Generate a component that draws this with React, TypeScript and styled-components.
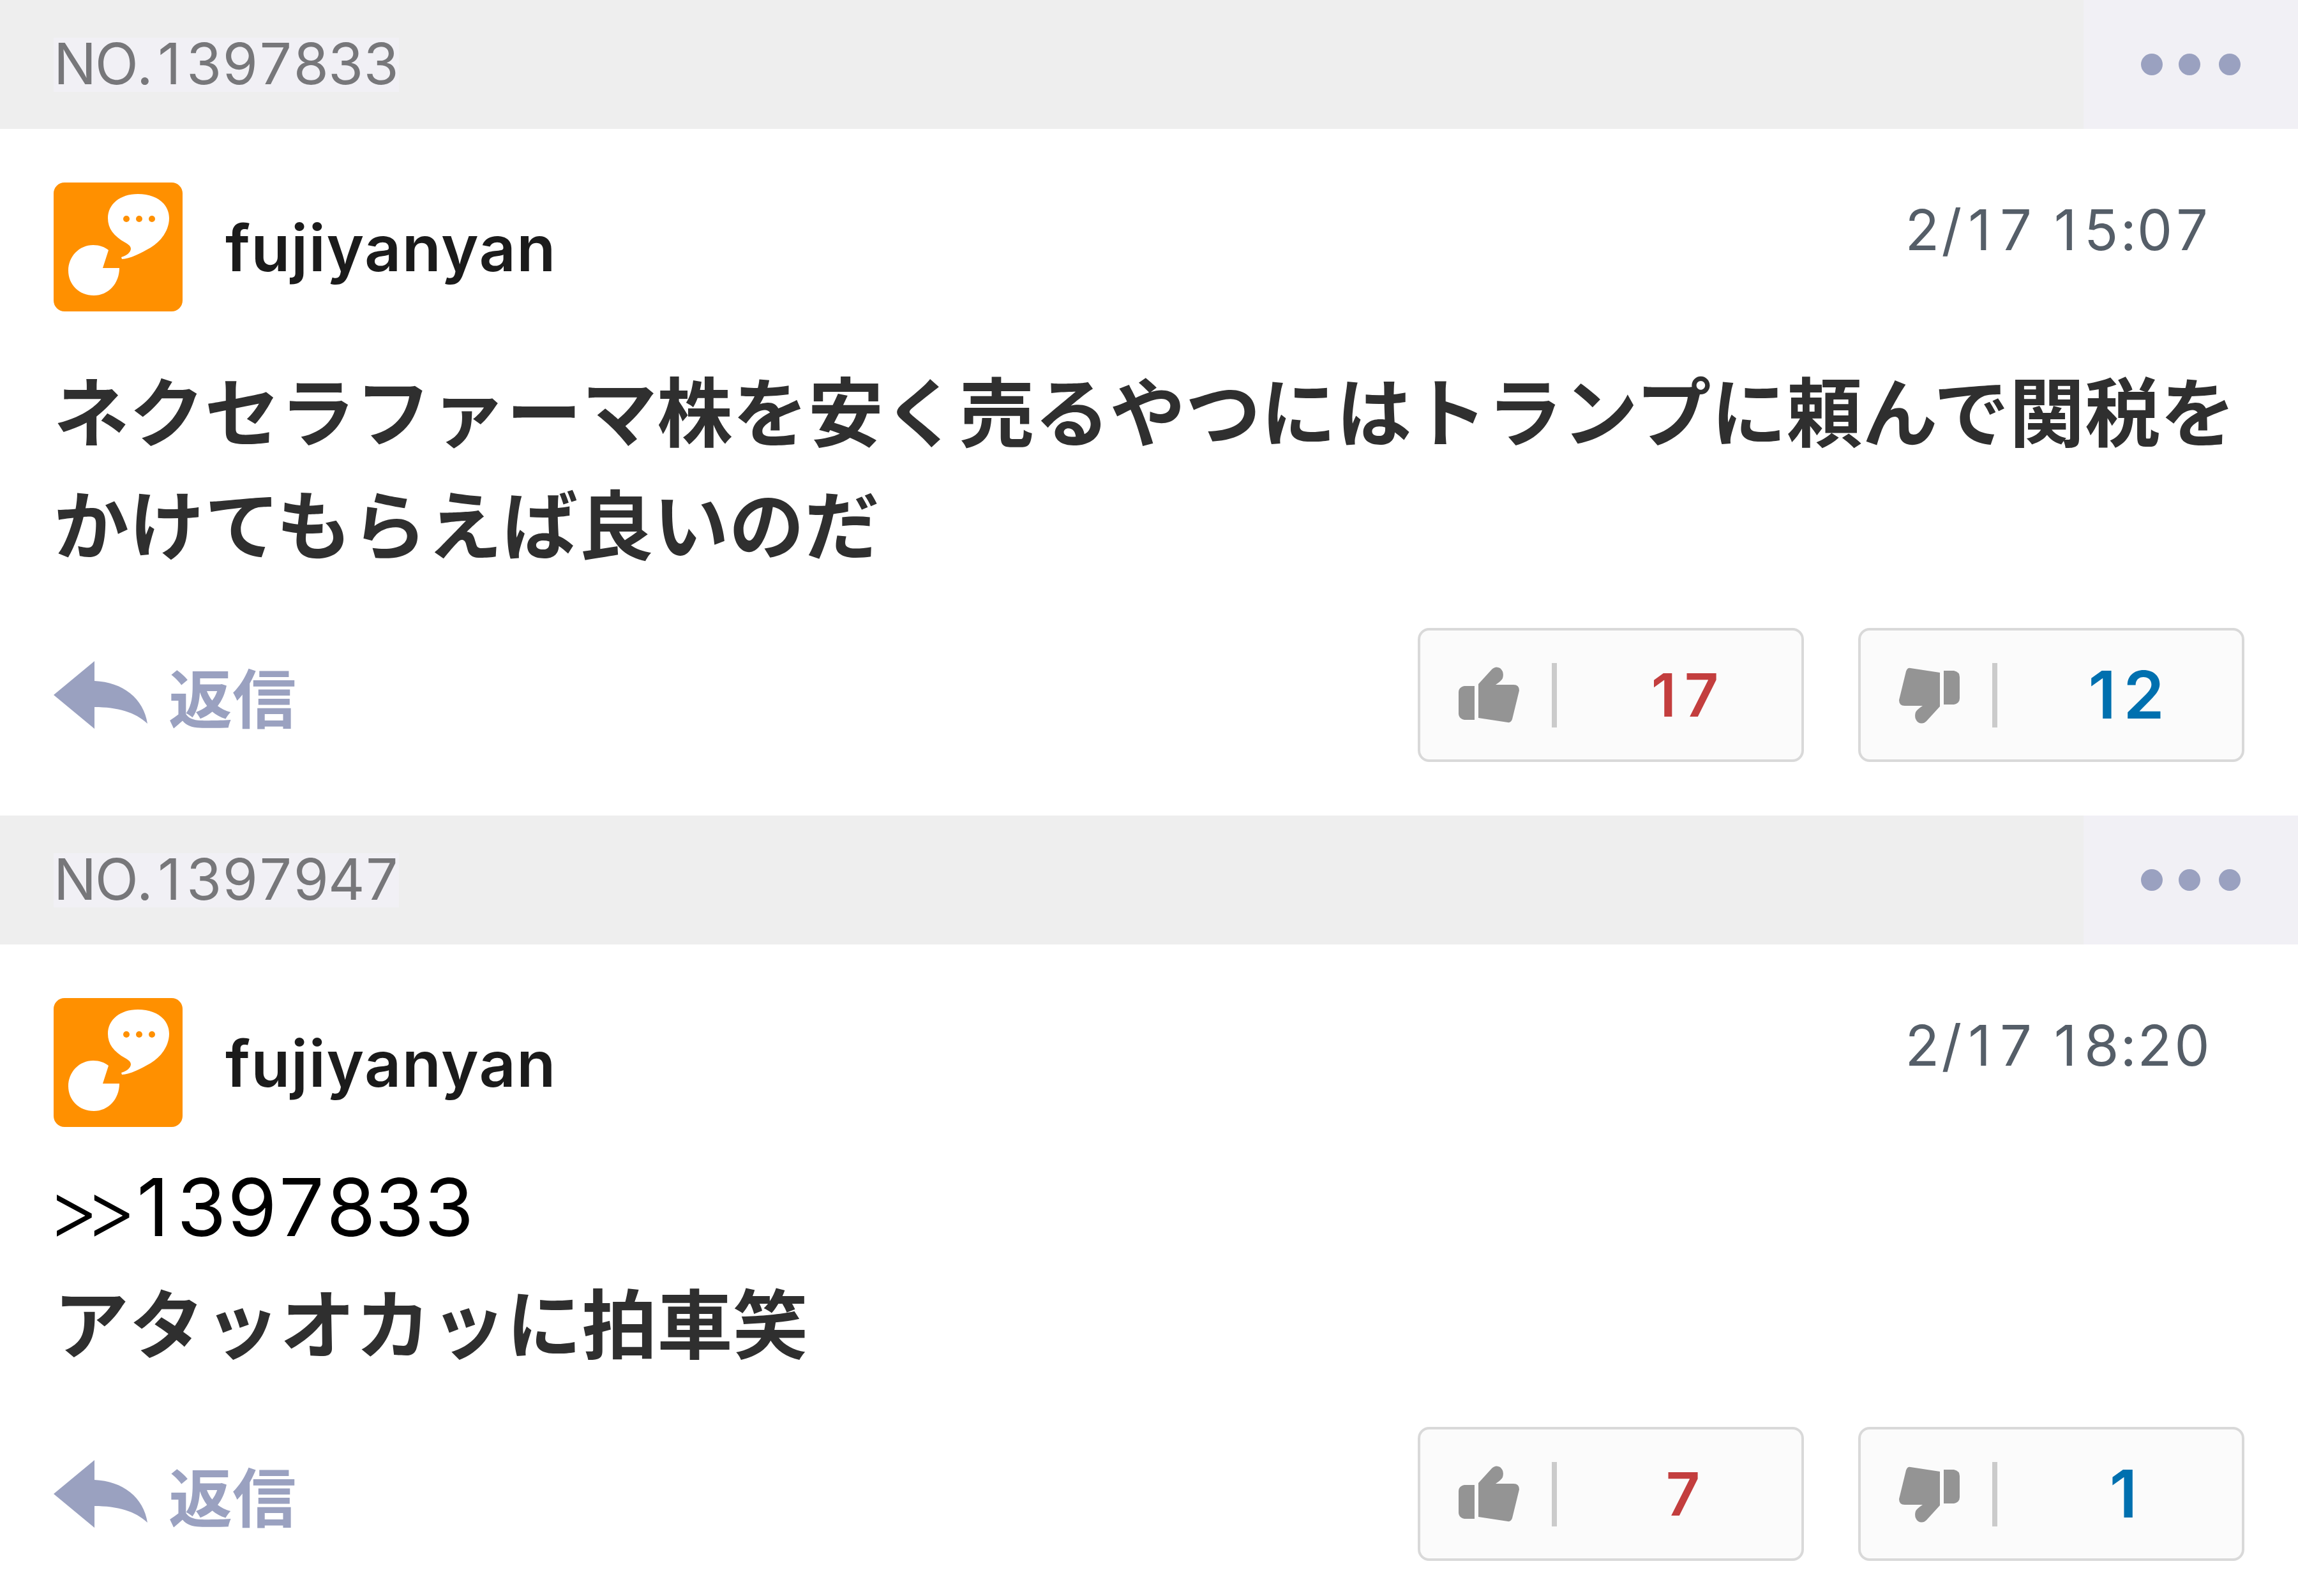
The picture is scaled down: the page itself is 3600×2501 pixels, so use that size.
import styled, { createGlobalStyle } from "styled-components";

interface Post {
  no: string;
  user: string;
  date: string;
  replyTo?: string;
  text: string;
  good: number;
  bad: number;
}

const posts: Post[] = [
  {
    no: "1397833",
    user: "fujiyanyan",
    date: "2/17 15:07",
    text: "ネクセラファーマ株を安く売るやつにはトランプに頼んで関税をかけてもらえば良いのだ",
    good: 17,
    bad: 12,
  },
  {
    no: "1397947",
    user: "fujiyanyan",
    date: "2/17 18:20",
    replyTo: "1397833",
    text: "アタッオカッに拍車笑",
    good: 7,
    bad: 1,
  },
];

const App = () => {
  return (
    <>
      <GlobalStyle />
      <Board>
        {posts.map((post) => (
          <PostItem key={post.no} post={post} />
        ))}
      </Board>
    </>
  );
};

export default App;

const PostItem = ({ post }: { post: Post }) => {
  return (
    <article>
      <PostHeader>
        <PostNumber>
          <Digits text={`NO.${post.no}`} />
        </PostNumber>
        <MenuButton aria-label="メニュー">
          <svg width="156" height="34" viewBox="0 0 156 34" fill="#9aa1c0">
            <circle cx="17" cy="17" r="17" />
            <circle cx="76" cy="17" r="17" />
            <circle cx="139" cy="17" r="17" />
          </svg>
        </MenuButton>
      </PostHeader>

      <PostBody>
        <UserRow>
          <AvatarIcon />
          <UserName>{post.user}</UserName>
          <PostDate>
            <Digits text={post.date} />
          </PostDate>
        </UserRow>

        {/* 返信先があるときは上の余白が狭い */}
        <Message $isReply={!!post.replyTo}>
          {post.replyTo && (
            <ReplyLink>
              <Arrows>&gt;&gt;</Arrows>
              <Digits text={post.replyTo} />
            </ReplyLink>
          )}
          <MessageText>{post.text}</MessageText>
        </Message>

        <ActionRow>
          <ReplyButton>
            <ReplyIcon />
            返信
          </ReplyButton>
          <VoteButton>
            <ThumbIcon />
            <Divider />
            <VoteCount $color="#c33e3e" $size={93}>
              <Digits text={String(post.good)} />
            </VoteCount>
          </VoteButton>
          <VoteButton>
            <ThumbIcon down />
            <Divider />
            <VoteCount $color="#0070af" $size={103}>
              <Digits text={String(post.bad)} />
            </VoteCount>
          </VoteButton>
        </ActionRow>
      </PostBody>
    </article>
  );
};

// 等幅数字の「1」は下線付きになるので、「1」だけ通常の字形で同じ幅に揃える
const Digits = ({ text }: { text: string }) => (
  <>
    {text.split(/(1)/).map((part, i) =>
      part === "1" ? <One key={i}>1</One> : part
    )}
  </>
);

const AvatarIcon = () => (
  <svg width="202" height="202" viewBox="0 0 202 202">
    <rect width="202" height="202" rx="17" fill="#ff9000" />
    <path
      d="M86 106 C80 101 72 98 62 98 C40 98 23 116 23 138 C23 160 40 177 63 177 C86 177 103 158 103 134 L77 134 Z"
      fill="#fff"
    />
    <path
      d="M132 18 C104 18 85 34 85 56 C85 72 94 84 112 94 C121 99 123 103 119 109 C116 113 112 115 106 117 L107 120 C119 120 138 110 152 102 C169 92 181 74 181 56 C181 34 162 18 132 18 Z"
      fill="#fff"
    />
    <g fill="#ff9000">
      <circle cx="114" cy="57" r="5" />
      <circle cx="134" cy="57" r="5" />
      <circle cx="154" cy="57" r="5" />
    </g>
  </svg>
);

const ReplyIcon = () => (
  <svg width="148" height="106" viewBox="0 0 148 106" fill="#9aa1c0">
    <path d="M0 53 L64 0 V31 C108 33 141 58 147 98 C128 80 100 72 64 72 V106 Z" />
  </svg>
);

const ThumbIcon = ({ down }: { down?: boolean }) => (
  <svg width="95" height="89" viewBox="0 0 95 89" fill="#949494">
    <g transform={down ? "rotate(180 47.5 44.5)" : undefined}>
      <path d="M9 30 H25 V83 H9 Q0 81 0 73 V40 Q0 32 9 30 Z" />
      <path d="M31 27 L52 4 Q58 -2 65 2 Q72 8 69 18 Q67 22 58 28 H86 Q95 28 95 37 L84 82 Q82 88 77 87 L31 80 Z" />
    </g>
  </svg>
);

const GlobalStyle = createGlobalStyle`
  body {
    margin: 0;
    background: #fff;
    font-family: Inter, "Noto Sans CJK JP", sans-serif;
  }

  button {
    border: 0;
    padding: 0;
    background: none;
    font-family: inherit;
  }
`;

const Board = styled.main`
  width: 3600px;
  height: 2501px;
  overflow: hidden;
`;

const One = styled.span`
  display: inline-block;
  width: 0.625em;
  text-align: center;
  font-variant-numeric: normal;
`;

const PostHeader = styled.header`
  display: flex;
  align-items: center;
  justify-content: space-between;
  height: 202px;
  padding-left: 84px;
  background: #eeeeee;
`;

const PostNumber = styled.span`
  box-sizing: border-box;
  width: 541px;
  height: 85px;
  background: #f1f0f5;
  color: #77777a;
  font-size: 89px;
  font-weight: 400;
  letter-spacing: -0.025em;
  line-height: 81px;
  font-variant-numeric: tabular-nums;
  white-space: nowrap;
`;

const MenuButton = styled.button`
  display: flex;
  align-items: center;
  justify-content: center;
  width: 336px;
  height: 100%;
  background: #f1f0f5;
`;

const PostBody = styled.div`
  padding: 84px;
`;

const UserRow = styled.div`
  display: flex;
  align-items: flex-start;
  height: 202px;
`;

const UserName = styled.span`
  margin: 43px 0 0 67px;
  color: #1b1b1b;
  font-size: 100px;
  font-weight: 600;
  letter-spacing: 1.5px;
  line-height: 120px;
`;

const PostDate = styled.time`
  width: 477px;
  margin: 14px 56px 0 auto;
  color: #555e68;
  font-size: 88px;
  font-weight: 400;
  letter-spacing: 0.015em;
  word-spacing: -4px;
  line-height: 120px;
  font-variant-numeric: tabular-nums;
  white-space: nowrap;
`;

const Message = styled.div<{ $isReply: boolean }>`
  margin-top: ${({ $isReply }) => ($isReply ? 37 : 63)}px;
  margin-right: -84px;
`;

const ReplyLink = styled.a`
  display: block;
  color: #000;
  font-size: 125px;
  font-weight: 400;
  letter-spacing: -0.028em;
  line-height: 177px;
  font-variant-numeric: tabular-nums;
`;

const Arrows = styled.span`
  margin: 0 5px 0 -8px;
  font-weight: 300;
  letter-spacing: -22px;
  line-height: 1;
  vertical-align: -3px;
`;

const MessageText = styled.p`
  margin: 0;
  color: #2f2f2f;
  font-family: "Noto Sans CJK JP", sans-serif;
  font-size: 118px;
  font-weight: 700;
  letter-spacing: 0.2px;
  line-height: 177px;
`;

const ActionRow = styled.div`
  display: flex;
  gap: 85px;
  height: 210px;
  margin-top: 79px;
`;

const ReplyButton = styled.button`
  display: flex;
  align-items: center;
  gap: 32px;
  margin-right: auto;
  color: #9aa1c0;
  font-family: "Noto Sans CJK JP", sans-serif;
  font-size: 100px;
  font-weight: 700;
`;

const VoteButton = styled.button`
  box-sizing: border-box;
  display: flex;
  align-items: center;
  width: 605px;
  padding-left: 60px;
  border: 4px solid #d9d9d9;
  border-radius: 18px;
  background: #fbfbfb;
`;

const Divider = styled.i`
  width: 8px;
  height: 101px;
  margin-left: 51px;
  background: #cbcbcb;
`;

const VoteCount = styled.span<{ $color: string; $size: number }>`
  flex: 1;
  padding-left: 12px;
  color: ${({ $color }) => $color};
  font-size: ${({ $size }) => $size}px;
  font-weight: 600;
  line-height: 100px;
  text-align: center;
  font-variant-numeric: tabular-nums;
`;
